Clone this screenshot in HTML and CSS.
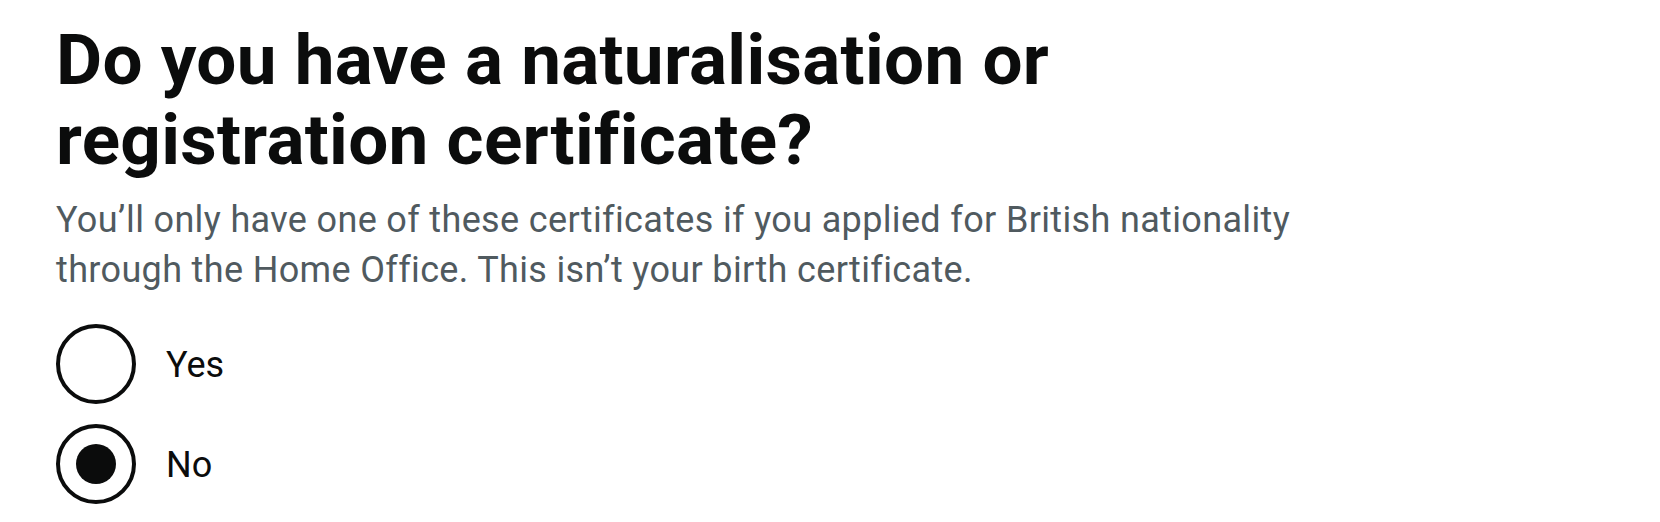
FILE: index.html
```html
<!DOCTYPE html>
<html lang="en">
<head>
    <meta charset="UTF-8">
    <meta name="viewport" content="width=device-width, initial-scale=1.0">
    <title>Naturalisation certificate</title>
    <link rel="stylesheet" href="styles.css">
</head>
<body>

    <main class="container">
        <form class="question-form">
            <fieldset class="fieldset">
                <legend class="legend">
                    <h1 class="heading">Do you have a naturalisation or registration certificate?</h1>
                </legend>

                <!-- Hint -->
                <div class="hint">You’ll only have one of these certificates if you applied for British nationality through the Home Office. This isn’t your birth certificate.</div>

                <!-- Radios -->
                <div class="radios">
                    <div class="radio-item">
                        <input class="radio-input" type="radio" id="cert-yes" name="certificate" value="yes">
                        <label class="radio-label" for="cert-yes">
                            <span class="radio-circle"><span class="radio-dot"></span></span>
                            <span class="radio-text">Yes</span>
                        </label>
                    </div>
                    <div class="radio-item">
                        <input class="radio-input" type="radio" id="cert-no" name="certificate" value="no" checked>
                        <label class="radio-label" for="cert-no">
                            <span class="radio-circle"><span class="radio-dot"></span></span>
                            <span class="radio-text">No</span>
                        </label>
                    </div>
                </div>
            </fieldset>
        </form>
    </main>

</body>
</html>
```

FILE: styles.css
```css
body {
    font-family: Roboto, "Liberation Sans", Arial, sans-serif;
    margin: 0;
    padding: 0;
    background-color: #fff;
    color: #0b0c0c;
}
.container {
    max-width: 1310px;
    padding: 20px 0 0 56px;
}
.fieldset {
    margin: 0;
    padding: 0;
    border: 0;
    min-width: 0;
}
.legend {
    padding: 0;
    margin: 0 0 15px;
}
.heading {
    font-size: 71px;
    line-height: 80px;
    font-weight: 700;
    letter-spacing: 0.3px;
    margin: 0;
    color: #0b0c0c;
}
.hint {
    font-size: 36px;
    line-height: 50px;
    letter-spacing: 0.35px;
    color: #505a5f;
    margin-bottom: 29px;
}
.radio-item {
    position: relative;
    margin-bottom: 20px;
}
.radio-input {
    position: absolute;
    opacity: 0;
    margin: 0;
    width: 80px;
    height: 80px;
}
.radio-label {
    display: flex;
    align-items: flex-start;
    cursor: pointer;
}
.radio-circle {
    box-sizing: border-box;
    width: 80px;
    height: 80px;
    border: 4px solid #0b0c0c;
    border-radius: 50%;
    display: flex;
    align-items: center;
    justify-content: center;
    flex-shrink: 0;
}
.radio-dot {
    width: 40px;
    height: 40px;
    border-radius: 50%;
    background-color: #0b0c0c;
    opacity: 0;
}
.radio-input:checked + .radio-label .radio-dot {
    opacity: 1;
}
.radio-text {
    font-size: 36px;
    line-height: 50px;
    padding: 16px 30px 10px;
}
```
